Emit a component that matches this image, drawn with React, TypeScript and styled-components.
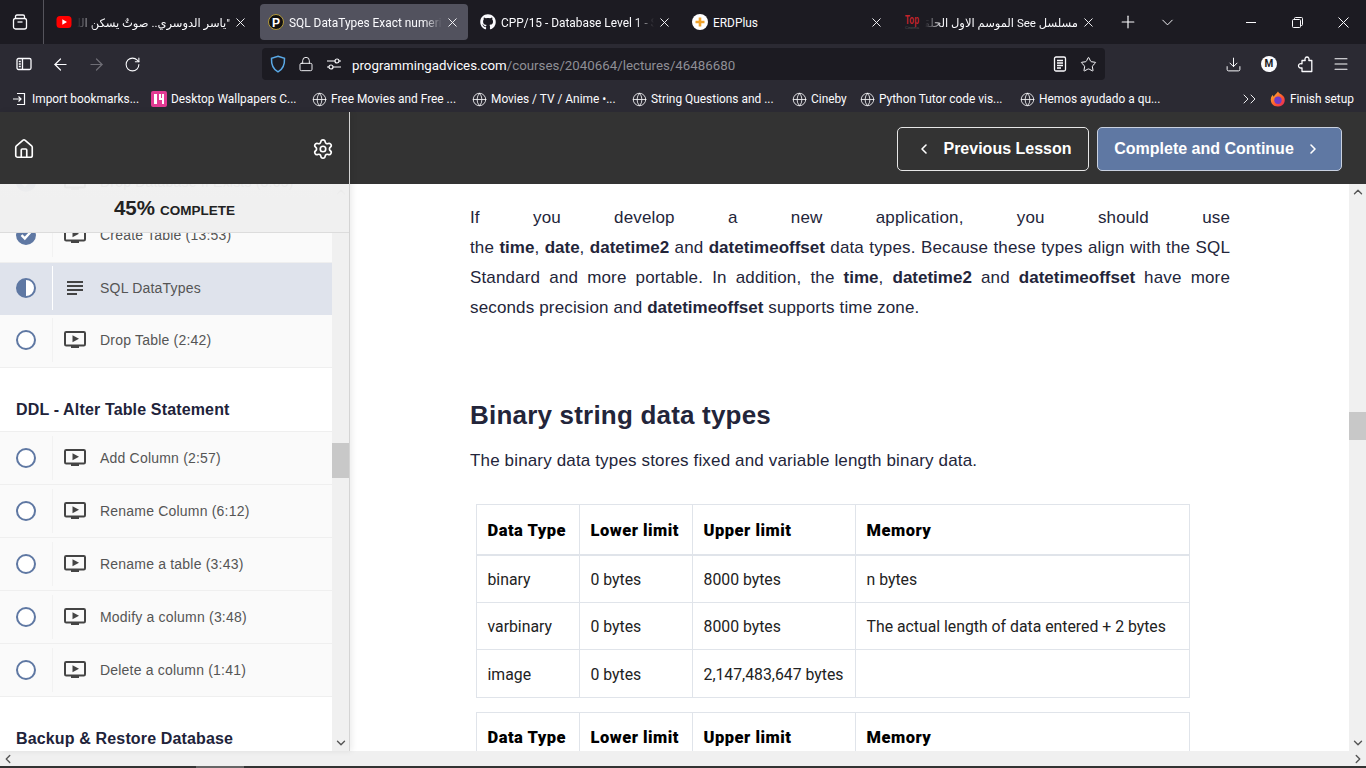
import React from "react";
import styled, { createGlobalStyle } from "styled-components";
import { FaGithub } from "react-icons/fa";
import { ChevronLeft, ChevronRight, ChevronUp, ChevronDown, Home, Settings, X, Plus, Globe, Star, Download, Menu, RotateCw, ArrowLeft, ArrowRight, Lock } from "lucide-react";

const GlobalStyle = createGlobalStyle`
  html, body { margin: 0; padding: 0; height: 100%; overflow: hidden; background: #fff; }
  * { box-sizing: border-box; }
  #root { height: 100%; }
`;

const UI_FONT = `Roboto, "Noto Sans", "DejaVu Sans", sans-serif`;
const PAGE_FONT = `"Liberation Sans", Arial, sans-serif`;

const Page = styled.div`
  width: 1366px;
  height: 768px;
  display: flex;
  flex-direction: column;
  overflow: hidden;
`;

/* browser chrome */
const TabBar = styled.div`
  height: 44px;
  background: #1c1b22;
  display: flex;
  align-items: center;
  color: #fbfbfe;
  font: 11.9px ${UI_FONT};
`;

const ViewButton = styled.div`
  width: 44px;
  height: 44px;
  padding-right: 3px;
  border-right: 1px solid #55545c;
  display: flex;
  align-items: center;
  justify-content: center;
`;

const Tabs = styled.div`
  display: flex;
  gap: 4px;
  margin-left: 4px;
`;

const Tab = styled.div<{ $active?: boolean }>`
  width: 208px;
  height: 36px;
  padding: 0 8px;
  border-radius: 4px;
  background: ${(p) => (p.$active ? "#52525e" : "transparent")};
  display: flex;
  align-items: center;
  gap: 5px;
`;

const TabIcon = styled.div`
  width: 16px;
  height: 16px;
  flex: none;
  display: flex;
  align-items: center;
  justify-content: center;
`;

const TabTitle = styled.div<{ $rtl?: boolean; $fade?: boolean }>`
  flex: 1;
  min-width: 0;
  margin-right: -3px;
  padding-top: 1px;
  white-space: nowrap;
  overflow: hidden;
  direction: ${(p) => (p.$rtl ? "rtl" : "ltr")};
  font-size: ${(p) => (p.$rtl ? "11.5px" : "inherit")};
  ${(p) =>
    p.$fade
      ? `mask-image: linear-gradient(${p.$rtl ? "to left" : "to right"}, #000 88%, transparent 100%);`
      : ""}
`;

const TabClose = styled.div`
  width: 16px;
  height: 16px;
  flex: none;
  display: flex;
  align-items: center;
  justify-content: center;
`;

const TabAction = styled.div<{ $width: number }>`
  width: ${(p) => p.$width}px;
  display: flex;
  justify-content: center;
`;

const WindowControls = styled.div`
  margin-left: auto;
  display: flex;
`;

const WindowButton = styled.div`
  width: 46px;
  height: 44px;
  display: flex;
  align-items: center;
  justify-content: center;
`;

const NavBar = styled.div`
  height: 42px;
  background: #2b2a33;
  display: flex;
  align-items: center;
  padding-bottom: 2px;
  color: #fbfbfe;
`;

const NavButton = styled.div<{ $dim?: boolean }>`
  width: 36px;
  height: 32px;
  display: flex;
  align-items: center;
  justify-content: center;
  color: ${(p) => (p.$dim ? "#6f6e76" : "#fbfbfe")};
`;

const NavLeft = styled.div`
  display: flex;
  margin-left: 6px;
  margin-right: 112px;
`;

const UrlBar = styled.div`
  width: 843px;
  height: 32px;
  background: #1c1b22;
  border-radius: 4px;
  display: flex;
  align-items: center;
  padding: 0 8px;
  font: 13.3px ${UI_FONT};
`;

const UrlIcon = styled.div<{ $width: number }>`
  width: ${(p) => p.$width}px;
  flex: none;
  display: flex;
  align-items: center;
`;

const UrlHost = styled.span`
  color: #fbfbfe;
`;

const UrlPath = styled.span`
  color: #8f8f96;
`;

const UrlText = styled.div`
  flex: 1;
  padding-top: 2px;
  white-space: nowrap;
`;

const UrlEnd = styled.div`
  display: flex;
  gap: 12px;
`;

const NavRight = styled.div`
  margin-left: 110px;
  display: flex;
`;

const Avatar = styled.div`
  width: 16px;
  height: 16px;
  border-radius: 50%;
  background: #fbfbfe;
  color: #1c1b22;
  font: bold 10px/16px ${UI_FONT};
  text-align: center;
`;

const BookmarkBar = styled.div`
  height: 26px;
  background: #2b2a33;
  display: flex;
  align-items: center;
  padding: 0 12px;
  color: #fbfbfe;
  font: 11.9px ${UI_FONT};
`;

const Bookmark = styled.div<{ $width: number }>`
  width: ${(p) => p.$width}px;
  flex: none;
  display: flex;
  align-items: center;
  gap: 4px;
  white-space: nowrap;
  overflow: hidden;
`;

const ImportLabel = styled.span`
  margin-left: 2px;
`;

const BookmarkEnd = styled.div`
  margin-left: auto;
  display: flex;
  align-items: center;
  gap: 4px;
`;

const MoreBookmarks = styled.div`
  margin-right: 5px;
  display: flex;
`;

const MoreChevron = styled(ChevronRight)`
  & + & {
    margin-left: -9px;
  }
`;

/* course player */
const Player = styled.div`
  flex: 1;
  min-height: 0;
  display: flex;
`;

const Sidebar = styled.aside`
  width: 350px;
  flex: none;
  display: flex;
  flex-direction: column;
  border-right: 1px solid #d4d4d4;
  box-shadow: 2px 0 6px rgba(0, 0, 0, 0.08);
  z-index: 1;
`;

const SidebarHeader = styled.div`
  height: 72px;
  flex: none;
  background: #333;
  display: flex;
  align-items: center;
  justify-content: space-between;
  padding: 2px 15px 0 13px;
  color: #fff;
`;

const SidebarBody = styled.div`
  flex: 1;
  min-height: 0;
  display: flex;
  position: relative;
  overflow: hidden;
  background: #fff;
`;

const ProgressBox = styled.div`
  position: absolute;
  top: 0;
  left: 0;
  right: 0;
  height: 49px;
  background: linear-gradient(rgba(240, 240, 240, 0.94), #f0f0f0 30%);
  border-bottom: 1px solid #dcdcdc;
  display: flex;
  align-items: center;
  justify-content: center;
  gap: 5px;
  color: #222;
  font-family: ${PAGE_FONT};
  font-weight: bold;
`;

const ProgressValue = styled.span`
  font-size: 20.5px;
`;

const ProgressLabel = styled.span`
  font-size: 13.5px;
  padding-top: 4px;
`;

const LessonList = styled.div`
  flex: 1;
  min-width: 0;
  margin-top: -27px;
  font-family: ${PAGE_FONT};
`;

const Lesson = styled.div<{ $active?: boolean; $flush?: boolean }>`
  height: ${(p) => (p.$active ? 52 : 53)}px;
  padding-bottom: ${(p) => (p.$flush ? 0 : 2)}px;
  display: flex;
  align-items: center;
  background: ${(p) => (p.$active ? "#dfe3ec" : "#fafafa")};
  border-bottom: 1px solid ${(p) => (p.$active ? "#dfe3ec" : "#efefef")};
`;

const LessonStatus = styled.div<{ $active?: boolean }>`
  width: 53px;
  height: 44px;
  flex: none;
  display: flex;
  align-items: center;
  justify-content: center;
  border-right: 1px solid ${(p) => (p.$active ? "#fff" : "#f2f2f2")};
`;

const LessonIcon = styled.div`
  width: 44px;
  margin-right: 3px;
  flex: none;
  display: flex;
  justify-content: center;
`;

const LessonTitle = styled.div`
  font-size: 14px;
  letter-spacing: 0.2px;
  color: #555;
`;

const SectionTitle = styled.div`
  height: 64px;
  padding: 0 16px 12px;
  display: flex;
  align-items: flex-end;
  font-size: 16px;
  font-weight: bold;
  letter-spacing: 0.15px;
  color: #21233a;
  border-bottom: 1px solid #efefef;
`;

const ScrollTrack = styled.div`
  width: 17px;
  flex: none;
  background: #f0f0f0;
  display: flex;
  flex-direction: column;
  align-items: center;
  color: #555;
  padding: 1px 0;
`;

const ScrollThumb = styled.div<{ $top: number; $height: number }>`
  width: 100%;
  height: ${(p) => p.$height}px;
  margin-top: ${(p) => p.$top}px;
  margin-bottom: auto;
  background: #c8c8c8;
`;

const Main = styled.main`
  flex: 1;
  min-width: 0;
  display: flex;
  flex-direction: column;
`;

const TopBar = styled.div`
  height: 72px;
  flex: none;
  background: #333;
  display: flex;
  align-items: center;
  justify-content: flex-end;
  gap: 8px;
  padding: 2px 24px 0 0;
`;

const NavLesson = styled.div<{ $primary?: boolean; $width: number }>`
  width: ${(p) => p.$width}px;
  height: 44px;
  border: 1px solid ${(p) => (p.$primary ? "#c9d1e0" : "#e6e6e6")};
  border-radius: 5px;
  background: ${(p) => (p.$primary ? "#5f78a3" : "transparent")};
  color: #fff;
  display: flex;
  align-items: center;
  justify-content: center;
  gap: 11px;
  padding: ${(p) => (p.$primary ? "0 4px 1px 0" : "0 0 1px 2px")};
  font: bold 16px ${PAGE_FONT};
`;

const ContentRow = styled.div`
  flex: 1;
  min-height: 0;
  display: flex;
  background: #fff;
`;

const Article = styled.article`
  flex: 1;
  min-width: 0;
  overflow: hidden;
  padding: 19px 119px 0 120px;
  font: 17px/30px ${PAGE_FONT};
  letter-spacing: 0.15px;
  color: #23253a;

  b {
    letter-spacing: 0;
  }
`;

const Paragraph = styled.p`
  margin: 0;
  text-align: justify;
`;

const FullLine = styled.span`
  display: block;
  text-align-last: justify;
`;

const Heading = styled.h2`
  margin: 62px 0 0;
  font: bold 26px/61px ${PAGE_FONT};
  letter-spacing: 0.2px;
`;

const Intro = styled.p`
  margin: 0 0 28px;
`;

const DataTable = styled.table`
  width: 713px;
  margin: 0 0 14px 6px;
  border-collapse: collapse;
  table-layout: fixed;
  font: 15.8px ${UI_FONT};
  letter-spacing: 0;
  color: #222;
`;

const HeadCell = styled.th<{ $width: number }>`
  width: ${(p) => p.$width}px;
  height: 50px;
  padding: 2px 10.5px 0;
  text-align: left;
  font-size: 16.5px;
  font-weight: 900;
  letter-spacing: 0.5px;
  color: #000;
  border: 1px solid #e0e4ea;
  border-bottom: 2px solid #e0e4ea;
`;

const BodyCell = styled.td`
  height: 47.5px;
  padding: 2px 10.5px 0;
  white-space: nowrap;
  border: 1px solid #e0e4ea;
`;

const HScroll = styled.div`
  height: 15px;
  flex: none;
  background: #f0f0f0;
  display: flex;
  align-items: center;
  justify-content: space-between;
  padding: 0 1px;
  color: #555;
`;

const Taskbar = styled.div`
  height: 2px;
  flex: none;
  background: #333;
  display: flex;
`;

const TaskbarItem = styled.div`
  width: 48px;
  margin-left: 196px;
  background: #666;
`;

const WINDOW_STROKE = 1;

const MonitorPlayIcon = () => (
  <svg width="22" height="18" viewBox="0 0 22 18">
    <rect x="1" y="1" width="20" height="13.5" rx="1.2" fill="none" stroke="#444" strokeWidth="2" />
    <path d="M8.5 4.2 L15 7.7 L8.5 11.2 Z" fill="#444" />
    <rect x="7" y="15" width="8" height="2" fill="#444" />
  </svg>
);

const TextLinesIcon = () => (
  <svg width="18" height="16" viewBox="0 0 18 16">
    <rect x="1" y="1" width="16" height="2" fill="#444" />
    <rect x="1" y="5" width="16" height="2" fill="#444" />
    <rect x="1" y="9" width="16" height="2" fill="#444" />
    <rect x="1" y="13" width="10" height="2" fill="#444" />
  </svg>
);

const StatusIcon = ({ state }: { state: "done" | "half" | "todo" }) => (
  <svg width="22" height="22" viewBox="0 0 22 22">
    <circle cx="11" cy="11" r="9" fill={state === "done" ? "#5f78a3" : "#fff"} stroke="#5f78a3" strokeWidth="2" />
    {state === "half" && <path d="M11 2 A9 9 0 0 0 11 20 Z" fill="#5f78a3" />}
    {state === "done" && <path d="M6.5 11.2 L9.8 14.4 L15.6 8" fill="none" stroke="#fff" strokeWidth="2.4" />}
  </svg>
);

const ViewIcon = () => (
  <svg width="18" height="18" viewBox="0 0 18 18" fill="none" stroke="#fbfbfe" strokeWidth="1.3">
    <rect x="2.5" y="5.5" width="13" height="10.5" rx="2" />
    <path d="M4.5 5.5 V3.5 Q4.5 2 6 2 H12 Q13.5 2 13.5 3.5 V5.5" />
    <path d="M6.5 9 H11.5" />
  </svg>
);

const SidebarToggleIcon = () => (
  <svg width="16" height="16" viewBox="0 0 16 16" fill="none" stroke="#fbfbfe" strokeWidth="1.3">
    <rect x="1" y="2.5" width="14" height="11" rx="1.5" />
    <path d="M6.5 2.5 V13.5 M2.8 5.5 H4.8 M2.8 8 H4.8 M2.8 10.5 H4.8" />
  </svg>
);

const ShieldIcon = () => (
  <svg width="16" height="18" viewBox="0 0 16 18" fill="none" stroke="#5aa9e6" strokeWidth="1.5">
    <path d="M8 1.2 L14.5 3.2 C14.8 9.5 12.5 14.5 8 16.8 C3.5 14.5 1.2 9.5 1.5 3.2 Z" />
  </svg>
);

const PermissionIcon = () => (
  <svg width="16" height="16" viewBox="0 0 16 16" fill="none" stroke="#fbfbfe" strokeWidth="1.2">
    <path d="M1 5 H9 M13 5 H15 M1 11 H3 M7 11 H15" />
    <circle cx="11" cy="5" r="2" />
    <circle cx="5" cy="11" r="2" />
  </svg>
);

const ReaderIcon = () => (
  <svg width="16" height="16" viewBox="0 0 16 16" fill="none" stroke="#fbfbfe" strokeWidth="1.3">
    <rect x="2.5" y="1" width="11" height="14" rx="1.5" />
    <path d="M5 4.5 H11 M5 7 H11 M5 9.5 H11 M5 12 H9" />
  </svg>
);

const ExtensionIcon = () => (
  <svg width="17" height="17" viewBox="0 0 17 17" fill="none" stroke="#fbfbfe" strokeWidth="1.3" strokeLinejoin="round">
    <path d="M5 15.5 V11.8 C2.5 12.6 1.5 11 1.5 9.8 C1.5 8.4 2.8 7 5 7.8 V4.5 H8.2 C7.4 2.6 8.6 1 10 1 C11.4 1 12.6 2.6 11.8 4.5 H14.8 V15.5 Z" />
  </svg>
);

const YouTubeIcon = () => (
  <svg width="16" height="16" viewBox="0 0 16 16">
    <rect x="0.5" y="2" width="15" height="12" rx="3.5" fill="#f00" />
    <path d="M6.3 5.2 L11 8 L6.3 10.8 Z" fill="#fff" />
  </svg>
);

const AdvicesIcon = () => (
  <svg width="16" height="16" viewBox="0 0 16 16">
    <circle cx="8" cy="8" r="7.5" fill="#111" stroke="#b39a3c" strokeWidth="1" />
    <text x="8" y="12.5" textAnchor="middle" fontSize="12" fontWeight="bold" fontFamily="Liberation Sans" fill="#fff">P</text>
  </svg>
);

const ErdIcon = () => (
  <svg width="16" height="16" viewBox="0 0 16 16">
    <circle cx="8" cy="8" r="8" fill="#fff" />
    <path d="M8 3.5 V12.5 M3.5 8 H12.5" stroke="#f0a32c" strokeWidth="2.6" />
  </svg>
);

const TopIcon = () => (
  <svg width="16" height="18" viewBox="0 0 16 18">
    <text x="8" y="10.5" textAnchor="middle" fontSize="12" fontWeight="bold" fontFamily="Liberation Sans" fill="#c4232b" textLength="14" lengthAdjust="spacingAndGlyphs">Top</text>
    <text x="8" y="16" textAnchor="middle" fontSize="4" fontFamily="Liberation Sans" fill="#555">Cinema</text>
  </svg>
);

const WallpaperIcon = () => (
  <svg width="16" height="16" viewBox="0 0 16 16">
    <rect width="16" height="16" rx="2" fill="#e23a93" />
    <path d="M3 3 H6 V13 H3 Z M8 3 H10 V7 H11 V3 H13 V13 H11 V9 H8 Z" fill="#fff" />
  </svg>
);

const ImportIcon = () => (
  <svg width="14" height="14" viewBox="0 0 14 14" fill="none" stroke="#fbfbfe" strokeWidth="1.2">
    <path d="M5 1.5 H12.5 V12.5 H5 M1 7 H9 M6.5 4.5 L9 7 L6.5 9.5" />
  </svg>
);

const FirefoxIcon = () => (
  <svg width="16" height="16" viewBox="0 0 16 16">
    <defs>
      <linearGradient id="ffBody" x1="0" y1="0" x2="1" y2="1">
        <stop offset="0" stopColor="#ffc02e" />
        <stop offset="0.55" stopColor="#ff5a2e" />
        <stop offset="1" stopColor="#e0245e" />
      </linearGradient>
    </defs>
    <path d="M8 0.5 C9 3 12 3 14 6 C16 10 14 15.5 8 15.5 C3 15.5 0.5 12 0.8 8 C1 6 2 4.5 3 4 C3 5 3.5 5.5 4 5.5 C4.5 3.5 6.5 3 8 0.5 Z" fill="url(#ffBody)" />
    <circle cx="8" cy="9.3" r="3.7" fill="#6e3bc9" />
  </svg>
);

const columnWidths = [103, 113, 163, 334];
const headers = ["Data Type", "Lower limit", "Upper limit", "Memory"];

const binaryRows = [
  ["binary", "0 bytes", "8000 bytes", "n bytes"],
  ["varbinary", "0 bytes", "8000 bytes", "The actual length of data entered + 2 bytes"],
  ["image", "0 bytes", "2,147,483,647 bytes", ""],
];

const globe = <Globe size={15} strokeWidth={1.3} />;

const bookmarks = [
  { label: "Desktop Wallpapers C...", width: 161, icon: <WallpaperIcon /> },
  { label: "Free Movies and Free ...", width: 160, icon: globe },
  { label: "Movies / TV / Anime •...", width: 160, icon: globe },
  { label: "String Questions and ...", width: 160, icon: globe },
  { label: "Cineby", width: 68, icon: globe },
  { label: "Python Tutor code vis...", width: 160, icon: globe },
  { label: "Hemos ayudado a qu...", width: 160, icon: globe },
];

type LessonData = { title: string; state: "done" | "half" | "todo"; text?: boolean };

const firstLessons: LessonData[] = [
  { title: "Drop Database If Exists (3:05)", state: "done" },
  { title: "Create Table (13:53)", state: "done" },
  { title: "SQL DataTypes", state: "half", text: true },
  { title: "Drop Table (2:42)", state: "todo" },
];

const alterLessons: LessonData[] = [
  { title: "Add Column (2:57)", state: "todo" },
  { title: "Rename Column (6:12)", state: "todo" },
  { title: "Rename a table (3:43)", state: "todo" },
  { title: "Modify a column (3:48)", state: "todo" },
  { title: "Delete a column (1:41)", state: "todo" },
];

const LessonRow = ({ lesson, flush }: { lesson: LessonData; flush?: boolean }) => (
  <Lesson $active={lesson.text} $flush={flush}>
    <LessonStatus $active={lesson.text}>
      <StatusIcon state={lesson.state} />
    </LessonStatus>
    <LessonIcon>{lesson.text ? <TextLinesIcon /> : <MonitorPlayIcon />}</LessonIcon>
    <LessonTitle>{lesson.title}</LessonTitle>
  </Lesson>
);

const closeIcon = <X size={15} strokeWidth={1.5} />;

export default function App() {
  return (
    <Page>
      <GlobalStyle />
      <TabBar>
        <ViewButton>
          <ViewIcon />
        </ViewButton>
        <Tabs>
          <Tab>
            <TabIcon><YouTubeIcon /></TabIcon>
            <TabTitle $rtl $fade>"ياسر الدوسري.. صوتٌ يسكن الليل والقلوب</TabTitle>
            <TabClose>{closeIcon}</TabClose>
          </Tab>
          <Tab $active>
            <TabIcon><AdvicesIcon /></TabIcon>
            <TabTitle $fade>SQL DataTypes Exact numeric</TabTitle>
            <TabClose>{closeIcon}</TabClose>
          </Tab>
          <Tab>
            <TabIcon><FaGithub size={16} /></TabIcon>
            <TabTitle $fade>CPP/15 - Database Level 1 - SQL</TabTitle>
            <TabClose>{closeIcon}</TabClose>
          </Tab>
          <Tab>
            <TabIcon><ErdIcon /></TabIcon>
            <TabTitle>ERDPlus</TabTitle>
            <TabClose>{closeIcon}</TabClose>
          </Tab>
          <Tab>
            <TabIcon><TopIcon /></TabIcon>
            <TabTitle $rtl $fade>مسلسل See الموسم الاول الحلقة الاولى</TabTitle>
            <TabClose>{closeIcon}</TabClose>
          </Tab>
        </Tabs>
        <TabAction $width={48}><Plus size={20} strokeWidth={1.4} /></TabAction>
        <TabAction $width={30}><ChevronDown size={19} strokeWidth={1.2} /></TabAction>
        <WindowControls>
          <WindowButton>
            <svg width="11" height="11" viewBox="0 0 11 11" stroke="#fbfbfe" strokeWidth={WINDOW_STROKE}><path d="M0 5.5 H10" /></svg>
          </WindowButton>
          <WindowButton>
            <svg width="11" height="11" viewBox="0 0 11 11" fill="none" stroke="#fbfbfe" strokeWidth={WINDOW_STROKE}><rect x="0.5" y="2.5" width="8" height="8" rx="1" /><path d="M2.5 2.5 V1.5 Q2.5 0.5 3.5 0.5 H9.5 Q10.5 0.5 10.5 1.5 V7.5 Q10.5 8.5 9.5 8.5 H8.5" /></svg>
          </WindowButton>
          <WindowButton>
            <svg width="11" height="11" viewBox="0 0 11 11" stroke="#fbfbfe" strokeWidth={WINDOW_STROKE}><path d="M0.5 0.5 L10.5 10.5 M10.5 0.5 L0.5 10.5" /></svg>
          </WindowButton>
        </WindowControls>
      </TabBar>

      <NavBar>
        <NavLeft>
          <NavButton><SidebarToggleIcon /></NavButton>
          <NavButton><ArrowLeft size={19} strokeWidth={1.5} /></NavButton>
          <NavButton $dim><ArrowRight size={19} strokeWidth={1.5} /></NavButton>
          <NavButton><RotateCw size={17} strokeWidth={1.5} /></NavButton>
        </NavLeft>
        <UrlBar>
          <UrlIcon $width={28}><ShieldIcon /></UrlIcon>
          <UrlIcon $width={28}><Lock size={16} strokeWidth={1.4} /></UrlIcon>
          <UrlIcon $width={26}><PermissionIcon /></UrlIcon>
          <UrlText>
            <UrlHost>programmingadvices.com</UrlHost>
            <UrlPath>/courses/2040664/lectures/46486680</UrlPath>
          </UrlText>
          <UrlEnd>
            <ReaderIcon />
            <Star size={17} strokeWidth={1.4} />
          </UrlEnd>
        </UrlBar>
        <NavRight>
          <NavButton><Download size={17} strokeWidth={1.4} /></NavButton>
          <NavButton><Avatar>M</Avatar></NavButton>
          <NavButton><ExtensionIcon /></NavButton>
          <NavButton><Menu size={18} strokeWidth={1.4} /></NavButton>
        </NavRight>
      </NavBar>

      <BookmarkBar>
        <Bookmark $width={139}>
          <ImportIcon />
          <ImportLabel>Import bookmarks...</ImportLabel>
        </Bookmark>
        {bookmarks.map((b) => (
          <Bookmark key={b.label} $width={b.width}>
            {b.icon}
            {b.label}
          </Bookmark>
        ))}
        <BookmarkEnd>
          <MoreBookmarks>
            <MoreChevron size={16} strokeWidth={1.4} />
            <MoreChevron size={16} strokeWidth={1.4} />
          </MoreBookmarks>
          <FirefoxIcon />
          Finish setup
        </BookmarkEnd>
      </BookmarkBar>

      <Player>
        <Sidebar>
          <SidebarHeader>
            <Home size={22} strokeWidth={1.8} />
            <Settings size={22} strokeWidth={1.8} />
          </SidebarHeader>
          <SidebarBody>
            <LessonList>
              {firstLessons.map((l) => (
                <LessonRow key={l.title} lesson={l} />
              ))}
              <SectionTitle>DDL - Alter Table Statement</SectionTitle>
              {alterLessons.map((l) => (
                <LessonRow key={l.title} lesson={l} flush />
              ))}
              <SectionTitle>Backup &amp; Restore Database</SectionTitle>
            </LessonList>
            <ScrollTrack>
              <ChevronUp size={14} strokeWidth={2.4} />
              <ScrollThumb $top={244} $height={35} />
              <ChevronDown size={14} strokeWidth={2.4} />
            </ScrollTrack>
            <ProgressBox>
              <ProgressValue>45%</ProgressValue>
              <ProgressLabel>COMPLETE</ProgressLabel>
            </ProgressBox>
          </SidebarBody>
        </Sidebar>

        <Main>
          <TopBar>
            <NavLesson $width={192}>
              <ChevronLeft size={16} strokeWidth={2.4} />
              Previous Lesson
            </NavLesson>
            <NavLesson $primary $width={245}>
              Complete and Continue
              <ChevronRight size={16} strokeWidth={2.4} />
            </NavLesson>
          </TopBar>
          <ContentRow>
            <Article>
              <Paragraph>
                <FullLine>If you develop a new application, you should use</FullLine>
                the <b>time</b>, <b>date</b>, <b>datetime2</b> and <b>datetimeoffset</b> data types. Because these types align with the SQL Standard and more portable. In addition, the <b>time</b>, <b>datetime2</b> and <b>datetimeoffset</b> have more seconds precision and <b>datetimeoffset</b> supports time zone.
              </Paragraph>
              <Heading>Binary string data types</Heading>
              <Intro>The binary data types stores fixed and variable length binary data.</Intro>
              <DataTable>
                <thead>
                  <tr>
                    {headers.map((h, i) => (
                      <HeadCell key={h} $width={columnWidths[i]}>{h}</HeadCell>
                    ))}
                  </tr>
                </thead>
                <tbody>
                  {binaryRows.map((row) => (
                    <tr key={row[0]}>
                      {row.map((cell, i) => (
                        <BodyCell key={i}>{cell}</BodyCell>
                      ))}
                    </tr>
                  ))}
                </tbody>
              </DataTable>
              <DataTable>
                <thead>
                  <tr>
                    {headers.map((h, i) => (
                      <HeadCell key={h} $width={columnWidths[i]}>{h}</HeadCell>
                    ))}
                  </tr>
                </thead>
              </DataTable>
            </Article>
            <ScrollTrack>
              <ChevronUp size={14} strokeWidth={2.4} />
              <ScrollThumb $top={213} $height={28} />
              <ChevronDown size={14} strokeWidth={2.4} />
            </ScrollTrack>
          </ContentRow>
        </Main>
      </Player>

      <HScroll>
        <ChevronLeft size={14} strokeWidth={2.4} />
        <ChevronRight size={14} strokeWidth={2.4} />
      </HScroll>
      <Taskbar>
        <TaskbarItem />
      </Taskbar>
    </Page>
  );
}
